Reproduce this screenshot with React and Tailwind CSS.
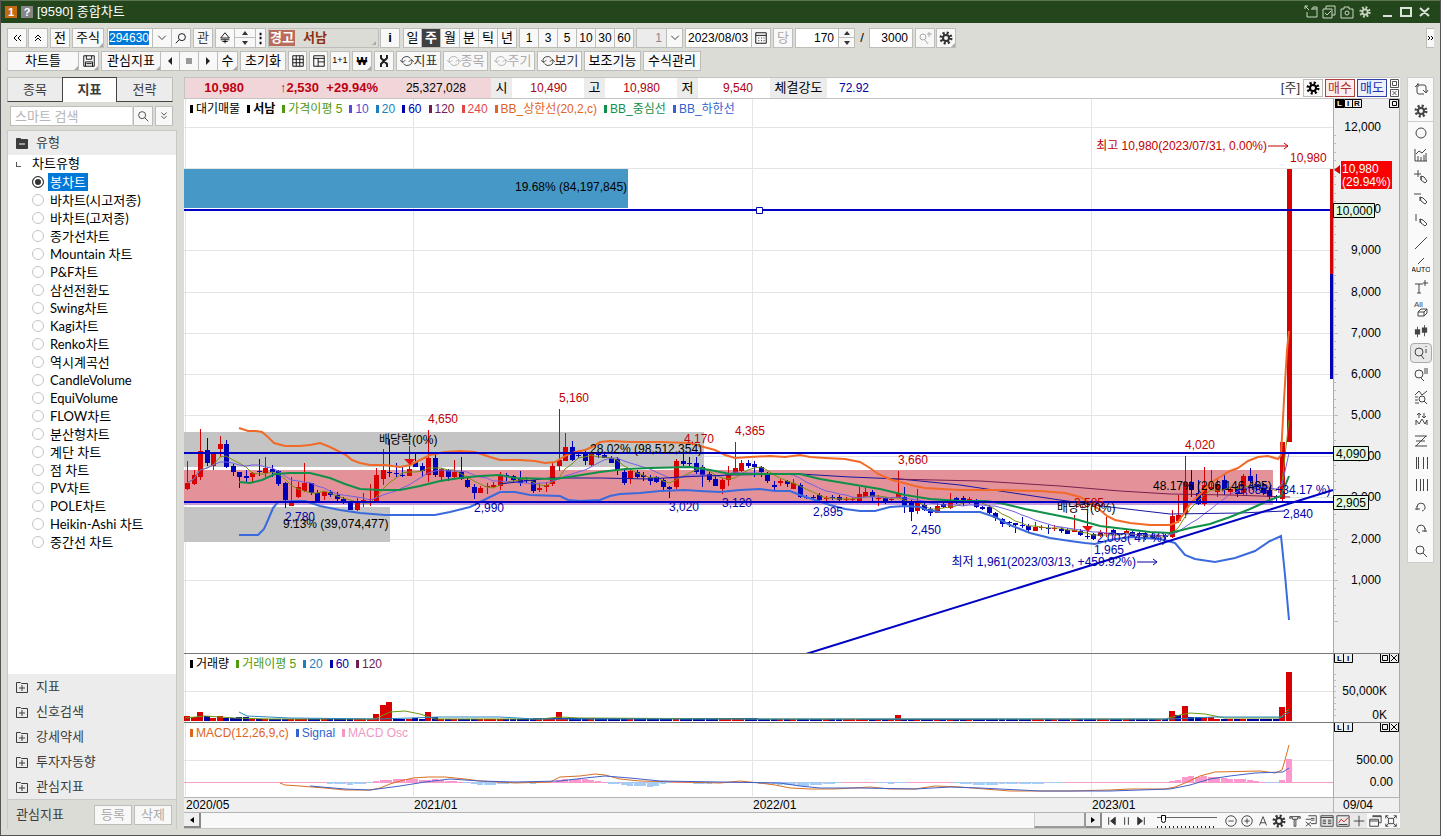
import { useState } from "react";
import { clsx } from "clsx";

const chartTypes = [
  "봉차트", "바차트(시고저종)", "바차트(고저종)", "종가선차트", "Mountain 차트", "P&F차트", "삼선전환도",
  "Swing차트", "Kagi차트", "Renko차트", "역시계곡선", "CandleVolume", "EquiVolume", "FLOW차트",
  "분산형차트", "계단 차트", "점 차트", "PV차트", "POLE차트", "Heikin-Ashi 차트", "중간선 차트",
];

// high, body top, body bottom, low, direction (1 = up); three units to a pixel
const candles = [
  [243,310,326,329,1],[270,285,312,315,1],[148,213,292,300,1],[173,210,248,258,0],[220,220,258,270,1],
  [168,192,206,232,1],[180,192,260,265,0],[252,258,275,288,0],[275,276,292,323,0],[270,288,293,305,0],
  [275,278,290,310,1],[237,273,276,287,0],[230,264,280,292,1],[255,267,276,290,0],[270,272,312,318,0],
  [305,308,360,383,0],[290,362,378,378,1],[307,320,350,355,1],[250,310,332,335,1],[308,310,340,345,0],
  [330,340,362,368,0],[332,336,347,360,1],[330,336,345,352,0],[335,345,358,362,0],[350,357,370,372,0],
  [362,365,390,390,0],[355,368,390,392,1],[340,360,364,380,1],[312,357,361,378,1],[265,284,362,365,1],
  [208,270,297,315,1],[178,275,278,292,0],[250,278,281,292,0],[262,285,288,292,0],[198,267,287,287,1],
  [220,246,262,262,0],[250,257,272,290,0],[150,234,284,305,1],[222,234,285,290,0],[265,268,290,307,1],
  [268,270,290,302,0],[240,275,290,295,1],[232,275,298,300,0],[295,300,320,325,0],[312,320,338,357,0],
  [318,324,338,340,1],[310,318,322,343,1],[305,316,320,325,1],[275,284,318,330,1],[280,284,290,303,0],
  [285,287,300,310,0],[272,297,310,318,0],[290,300,303,310,0],[300,300,333,340,0],[310,325,330,335,1],
  [305,316,320,337,1],[250,257,313,318,1],[87,240,258,272,1],[158,200,242,243,1],[182,200,240,243,0],
  [215,226,229,235,0],[210,215,242,255,0],[215,220,254,258,1],[215,222,225,235,0],[220,224,233,235,0],
  [228,234,248,250,0],[232,236,270,285,0],[265,275,308,315,0],[265,272,298,312,1],[270,275,291,295,0],
  [275,286,290,303,0],[285,290,303,315,0],[288,290,305,310,0],[295,300,320,337,0],[318,322,326,353,0],
  [238,243,320,327,1],[222,243,252,258,0],[230,248,251,260,0],[232,250,275,283,0],[255,262,284,320,0],
  [275,283,300,307,0],[285,297,318,318,0],[295,300,326,342,1],[258,283,299,318,1],[187,264,278,280,1],
  [240,250,272,275,1],[240,249,257,265,0],[243,252,261,290,0],[258,261,276,290,0],[275,280,303,308,0],
  [303,314,321,332,0],[298,304,309,317,1],[300,304,311,322,0],[298,310,328,328,1],[310,314,350,355,0],
  [345,350,353,357,0],[345,350,354,356,0],[340,345,360,362,0],[348,354,358,363,1],[346,352,355,360,0],
  [345,350,359,368,0],[352,356,359,367,1],[350,356,359,362,1],[320,342,362,362,1],[320,335,350,350,1],
  [330,336,350,362,0],[345,354,357,377,1],[350,354,368,372,0],[350,356,359,365,1],[272,340,354,355,1],
  [320,350,375,398,0],[360,367,396,423,0],[328,370,392,402,1],[370,376,390,392,0],[382,388,398,408,0],
  [370,378,398,398,1],[365,372,380,385,0],[338,366,385,387,1],[350,355,362,372,0],[348,354,365,378,0],
  [350,356,359,372,1],[358,364,381,385,0],[378,382,387,390,0],[375,382,400,402,0],[395,400,413,422,0],
  [415,418,432,442,0],[422,426,430,440,0],[428,430,434,460,0],[410,434,438,445,0],[433,437,449,455,0],
  [426,440,452,453,1],[435,442,445,450,1],[435,444,448,462,0],[436,445,448,452,1],[440,446,452,458,0],
  [445,450,462,462,0],[405,450,455,455,1],[448,453,466,468,0],[400,467,470,478,0],[458,462,476,480,0],
  [450,456,469,470,1],[412,458,461,472,1],[448,450,462,465,0],[458,460,466,468,0],[450,454,460,460,1],
  [452,456,470,470,0],[455,458,468,472,0],[455,462,476,480,0],[460,464,476,478,0],[462,465,468,472,1],
  [462,466,472,485,0],[390,408,472,475,1],[345,405,422,428,1],[228,306,402,415,1],[270,305,330,350,0],
  [300,338,372,375,0],[260,315,372,378,1],[270,322,328,330,1],[295,312,335,350,1],[282,300,328,345,0],
  [320,328,336,345,1],[318,328,342,350,0],[282,288,340,348,1],[265,288,302,310,0],[282,312,322,332,0],
  [310,322,338,345,0],[322,330,350,357,0],[345,350,354,368,0],[185,185,357,362,1],[-633,-633,186,186,1],
];

const barX = (i) => 187 + Math.round(i * 6.52);
const tickY = (v) => Math.round(380 + v / 3);
const priceY = (p) => Math.round(621 - p * 0.04118);

const average = (n) =>
  candles
    .map((_, i) => {
      const part = candles.slice(Math.max(0, i - n + 1), i + 1);
      const sum = part.reduce((acc, c) => acc + (c[4] ? c[1] : c[2]), 0);
      return `${barX(i)},${tickY(sum / part.length)}`;
    })
    .join(" ");

const upperBand =
  "239,428 248,431 256,431 262,432 269,438 274,443 285,446 300,446 310,445 320,443 330,447 340,452 346,455 352,460 360,463 370,465 385,465 400,467 410,465 420,460 430,455 445,452 460,451 475,452 490,457 500,460 520,460 535,461 545,463 555,462 560,459 567,455 575,452 585,450 592,447 600,442 610,441 630,442 660,442 690,443 700,446 715,450 725,455 735,458 750,457 770,456 785,457 800,455 810,457 825,458 845,459 860,462 870,468 878,474 885,477 892,480 900,482 915,486 925,488 960,490 1000,490 1040,491 1065,493 1080,497 1090,503 1100,510 1107,516 1115,520 1130,523 1150,525 1170,525 1178,522 1185,512 1190,504 1200,494 1210,483 1220,477 1230,471 1238,468 1248,461 1258,457 1268,456 1278,459 1281,455 1284,400 1287,350 1289,331";
const lowerBand =
  "239,535 258,535 264,529 268,520 273,508 278,502 295,501 305,501 320,506 340,510 360,513 385,515 435,515 450,512 470,507 480,502 490,497 500,492 515,492 530,495 560,496 568,500 580,501 600,500 610,496 620,494 640,493 660,491 685,490 700,491 720,492 740,490 760,489 775,491 790,491 800,495 815,500 830,505 845,509 860,511 875,511 890,507 905,506 920,507 927,510 940,512 980,512 995,517 1010,525 1030,533 1050,538 1070,541 1085,543 1095,544 1110,540 1130,537 1160,539 1175,543 1185,555 1195,559 1215,562 1235,558 1255,551 1270,541 1281,536 1285,575 1289,620";
const middleBand =
  "239,482 250,483 262,480 275,474 290,473 310,473 330,478 345,484 360,489 380,490 400,490 420,486 440,481 460,478 480,476 500,475 515,478 555,479 575,476 600,472 625,469 650,468 690,467 710,470 730,474 800,474 820,479 850,484 880,489 905,495 930,499 960,501 985,501 1000,503 1025,509 1050,514 1075,519 1100,526 1125,529 1150,532 1170,533 1190,528 1210,524 1230,517 1250,509 1270,500 1281,496 1289,476";

// x, baseline, text, color
const chartLabels = [
  [428, 423, "4,650", "#c00000"], [559, 402, "5,160", "#c00000"], [684, 443, "4,170", "#c00000"],
  [735, 435, "4,365", "#c00000"], [898, 464, "3,660", "#c00000"], [1074, 507, "3,585", "#c00000"],
  [1185, 449, "4,020", "#c00000"], [1290, 162, "10,980", "#c00000"],
  [285, 521, "2,780", "#0000a8"], [474, 512, "2,990", "#0000a8"], [669, 511, "3,020", "#0000a8"],
  [722, 507, "3,120", "#0000a8"], [813, 516, "2,895", "#0000a8"], [911, 534, "2,450", "#0000a8"],
  [1094, 554, "1,965", "#0000a8"], [1283, 518, "2,840", "#0000a8"],
  [515, 191, "19.68% (84,197,845)", "#000"], [590, 453, "28.02% (98,512,354)", "#000"],
  [1153, 490, "48.17% (206,146,495)", "#000"], [283, 528, "9.13% (39,074,477)", "#000"],
  [379, 444, "배당락(0%)", "#000"], [1057, 512, "배당락(0%)", "#000"],
  [1097, 542, "2,003( 47 %)", "#0000a8"], [1238, 494, "3,083( +34.17 %)", "#0000a8"],
];

const volumes = {
  0: 4, 1: 3, 2: 8, 3: 4, 4: 2, 5: 4, 6: 2, 7: 2, 8: 3, 9: 3, 29: 6, 30: 15, 31: 18, 35: 2, 37: 8, 38: 3,
  57: 8, 109: 5, 151: 9, 152: 5, 153: 14, 154: 3, 155: 3, 156: 3, 157: 3, 168: 13, 169: 48,
};

// first bar, heights above (+) or below (-) the zero line
const oscillator = [
  [22, [-2, -2, -2, -3, -2, -2, -1, 2, 3, 3, 4, 4, 4, 4, 3, 3, 4, 3, 2, 2, 1]],
  [43, [-1, -2, -3, -3, -3, -2, -2, -1, -1, 0, -2, -1, 0, 1, 3, 4, 4, 4, 4, 3, 2, 1]],
  [65, [-2, -2, -3, -4, -4, -4, -5, -4, -2, -1, 0, 1, 0, -2, -2, -2, -1]],
  [87, [-1, -2, -2, -2, -3, -3, -3, -4, -4, -3, -3, -2, -2, -1]],
  [106, [-1, -1, -2, -1, -1, 0, 1, 1, 1, 1, 0, 0, -1, -2, -2, -3, -3, -3, -3, -2, -2, -2, -2, -2, -2, -2, -1, -1, -1]],
  [143, [1, 1, 1, 1]],
  [151, [2, 3, 6, 7, 6, 7, 6, 6, 5, 4, 4, 4, 3, 2, 1, -1, -1, 3, 24]],
];

const icons = {
  rewind: "M8 5 5 8l3 3M12 5 9 8l3 3",
  up: "M5 8l3-3 3 3M5 11l3-3 3 3",
  down: "M5 4l3 3 3-3M5 8l3 3 3-3",
  forward: "M5 6l2 2-2 2M8 6l2 2-2 2",
  chevron: "M3 5l5 5 5-5",
  search: "M10 10l4 4M7 11a4 4 0 1 1 0-8 4 4 0 0 1 0 8",
  searchLeft: "M6 10l-4 4M9 11a4 4 0 1 1 0-8 4 4 0 0 1 0 8",
  searchPlus: "M8 10l3 4M6 10a3 3 0 1 1 0-6 3 3 0 0 1 0 6M12 2v5M10 4h5",
  searchInfo: "M8 10l3 4M6 11a4 4 0 1 1 0-8 4 4 0 0 1 0 8M13 4v4M13 1v1",
  searchList: "M8 11l3 3M6 11a4 4 0 1 1 0-8 4 4 0 0 1 0 8M11 2h4M11 4h4M11 6h4",
  sort: "M8 2 3 8h10zM3 10h10M8 10v4M5 12h6",
  save: "M2 2h12v12H2zM5 2v4h6V2M4 14V9h8v5M5 11h6",
  table: "M2 2h12v12H2zM2 6h12M2 10h12M6 2v12M10 2v12",
  layout: "M2 2h12v12H2zM2 5h12M7 5v9M7 9h7",
  refresh: "M3 9a5 4 0 0 1 9-4M13 7a5 4 0 0 1-9 4M0 7l3 3 3-3M10 9l3-3 3 3",
  calendar: "M2 2h12v12H2zM2 5h12M5 8h1M8 8h1M11 8h1M5 11h1M8 11h1M11 11h1",
  loop: "M5 4h6a2 2 0 0 1 2 2v5M10 9l3 3 2-3M11 13H6a2 2 0 0 1-2-2V5M2 6l3-3M5 2v4",
  circle: "M8 3a5 5 0 1 1 0 10A5 5 0 0 1 8 3",
  chart: "M2 2v12h12M5 14V9M8 14v-4M11 14V8M13 14V6M3 7l3-3 3 2 4-4",
  crossPen: "M1 5h7M5 1v7M8 7l3 1 3 4-2 2-4-3zM8 7v4",
  dashPen: "M1 3h7M7 6l3 1 4 4-2 2-4-3zM7 6v4",
  barPen: "M3 1v7M7 6l3 1 4 4-2 2-4-3zM7 6v4",
  slash: "M2 14 14 2",
  text: "M2 5h8M6 5v9M4 14h4M12 1v6M10 4h5",
  zigSearch: "M2 6l4-4 3 4 5-4M2 8h3M2 11h3M2 14h4M9 13a3 3 0 1 1 0-6 3 3 0 0 1 0 6M11 12l3 3",
  waves: "M3 14V9l3 4 3-5 3 5 2-4v5M6 7V2L4 4M6 2l2 2M11 2v5l-2-2M11 7l2-2",
  zed: "M2 3h12M13 3 3 13M3 8h9M2 13h12",
  undo: "M2 10h5M4 7v4M4 8a4 4 0 1 1 5 4",
  redo: "M14 10H9M12 7v4M12 8a4 4 0 1 0-5 4",
  minus: "M8 2a6 6 0 1 1 0 12A6 6 0 0 1 8 2M5 8h6",
  plus: "M8 2a6 6 0 1 1 0 12A6 6 0 0 1 8 2M5 8h6M8 5v6",
  letterA: "M4 13 8 3l4 10M5 10h6",
  brush: "M2 5V3h12v2l-3-1v2H5V4zM7 6v8h2V6",
  note: "M5 2h9v9H8M2 6h6M2 9l6 5M8 9l-6 5M8 5h4M8 7h4",
  panel: "M1 2h14v12H1zM1 4h14M3 7h4M3 9h4M3 11h4M9 7h4M9 9h4M9 11h4",
  cross: "M8 2v12M2 8h12",
  windows: "M5 2h10v8h-3M2 6h10v8H2zM2 8h10M5 3h10",
  fullscreen: "M2 5V2h3M11 2h3v3M14 11v3h-3M5 14H2v-3M5 5h6v6H5zM2 2l3 3M14 2l-3 3M2 14l3-3M14 14l-3-3",
};

const Icon = ({ name, className = "size-4" }) => (
  <svg viewBox="0 0 16 16" className={clsx("shrink-0", className)} fill="none" stroke="currentColor" aria-hidden="true">
    <path d={icons[name]} />
  </svg>
);

const Gear = ({ className = "size-4" }) => (
  <svg viewBox="0 0 16 16" className={clsx("shrink-0", className)} fill="none" stroke="currentColor" aria-hidden="true">
    <circle cx="8" cy="8" r="3" strokeWidth="2" />
    <circle cx="8" cy="8" r="5" strokeWidth="3" strokeDasharray="2 1.927" />
  </svg>
);

const Btn = ({ children, className, corner, label }) => (
  <button
    type="button"
    aria-label={label}
    className={clsx(
      "relative flex h-5 shrink-0 items-center justify-center border border-[#bdbdb9] bg-[#f8f8f8] whitespace-nowrap",
      className
    )}
  >
    {children}
    {corner && (
      <svg viewBox="0 0 4 4" className="absolute right-0 bottom-0 size-1 fill-[#aaa]" aria-hidden="true">
        <path d="M4 0v4H0z" />
      </svg>
    )}
  </button>
);

const Spinner = ({ className }) => (
  <div className={clsx("flex h-5 shrink-0 flex-col border border-[#bdbdb9] bg-[#f8f8f8]", className)}>
    <button type="button" aria-label="증가" className="flex h-[9px] items-center justify-center border-b border-[#bdbdb9]">
      <svg viewBox="0 0 6 4" className="h-1 w-1.5 fill-[#333]"><path d="M3 0l3 4H0z" /></svg>
    </button>
    <button type="button" aria-label="감소" className="flex h-[9px] items-center justify-center">
      <svg viewBox="0 0 6 4" className="h-1 w-1.5 fill-[#333]"><path d="M0 0h6L3 4z" /></svg>
    </button>
  </div>
);

const TitleBar = () => (
  <header className="flex h-[23px] items-center gap-1 border-t border-[#5b7552] bg-[#24461c] pr-2 pl-1 text-[13px] text-white">
    <span className="flex size-3 items-center justify-center bg-[#c46a10] text-[11px] font-bold">1</span>
    <span className="flex size-3 items-center justify-center bg-[#858585] text-[11px] font-bold">?</span>
    <h1 className="grow text-[13px]">[9590] 종합차트</h1>
    <div className="flex items-center gap-1 text-[#c9d6c4]">
      <svg viewBox="0 0 14 14" className="size-3.5" fill="none" stroke="currentColor"><path d="M1 1l4 4M1 4V1h3M3 7v5h10V4H7M9 4V2h4v2" /></svg>
      <svg viewBox="0 0 14 14" className="size-3.5" fill="none" stroke="currentColor"><path d="M1 4h9v9H1zM4 4V1h9v9h-3M3 8l2 2 4-4" /></svg>
      <svg viewBox="0 0 14 14" className="size-3.5" fill="none" stroke="currentColor"><path d="M1 4h3V2h5v2h4v9H1z" /><circle cx="7" cy="8" r="2" /></svg>
      <Gear className="size-3.5" />
      <svg viewBox="0 0 50 12" className="ml-1.5 h-3 w-[50px]" fill="none" stroke="#dbe4d8" strokeWidth="2"><path d="M1 10h9M19 2h10v8H19zM38 2l9 8M47 2l-9 8" /></svg>
    </div>
  </header>
);

const periods = ["일", "주", "월", "분", "틱", "년"];
const minutes = ["1", "3", "5", "10", "30", "60"];

const Toolbar = () => {
  const [code, setCode] = useState("294630");
  const [period, setPeriod] = useState("주");

  return (
    <div className="flex flex-col gap-[3px] px-1.5 pt-[5px] pb-1.5 text-[13px]">
      <div className="flex items-center">
        <Btn label="처음" className="w-5"><Icon name="rewind" /></Btn>
        <Btn label="위로" className="ml-px w-5"><Icon name="up" /></Btn>
        <Btn className="ml-0.5 w-5">전</Btn>
        <Btn className="ml-0.5 w-8" corner>주식</Btn>
        <div className="ml-[3px] flex h-5 w-[45px] items-center border border-r-0 border-[#bdbdb9] bg-white px-px">
          <input
            aria-label="종목코드"
            className="h-3.5 w-10 bg-[#0078d7] text-[12px] text-white outline-none"
            value={code}
            onChange={(e) => setCode(e.target.value)}
          />
        </div>
        <Btn label="목록" className="w-5"><Icon name="chevron" className="size-3" /></Btn>
        <Btn label="검색" className="w-[19px] border-l-0"><Icon name="searchLeft" className="size-3.5" /></Btn>
        <Btn className="ml-0.5 w-5 text-[#444]">관</Btn>
        <Btn label="정렬" className="ml-0.5 w-5"><Icon name="sort" className="size-3.5" /></Btn>
        <Spinner className="w-[21px] border-l-0" />
        <Btn label="더보기" className="w-[10px] border-l-0 font-bold">⋮</Btn>
        <button type="button" className="relative ml-0.5 flex h-5 w-[111px] items-center gap-2 border border-[#bdbdb9] bg-[#dcdcd6] text-left font-bold">
          <span className="bg-[#b96c5c] px-px text-[13px] leading-4 text-white">경고</span>
          <span className="text-[#8e3010]">서남</span>
          <svg viewBox="0 0 4 4" className="absolute right-0.5 bottom-0.5 size-1 fill-[#aaa]" aria-hidden="true"><path d="M4 0v4H0z" /></svg>
        </button>
        <Btn className="ml-px w-5 font-bold">i</Btn>
        <div className="ml-[3px] flex">
          {periods.map((p, i) => (
            <button
              key={p}
              type="button"
              onClick={() => setPeriod(p)}
              className={clsx(
                "flex h-5 w-[19px] items-center justify-center border-y border-r border-[#bdbdb9]",
                i === 0 && "border-l",
                p === period ? "bg-[#414141] font-bold text-white" : "bg-[#f8f8f8]"
              )}
            >
              {p}
            </button>
          ))}
        </div>
        <div className="ml-0.5 flex border-l border-[#bdbdb9] text-[12px]">
          {minutes.map((m) => (
            <button key={m} type="button" className="flex h-5 w-[19px] items-center justify-center border-y border-r border-[#bdbdb9] bg-[#f8f8f8]">
              {m}
            </button>
          ))}
        </div>
        <input aria-label="분 주기" readOnly value="1" className="ml-0.5 h-5 w-[30px] border border-r-0 border-[#bdbdb9] bg-[#ececec] pr-1 text-right text-[12px] text-[#888]" />
        <Btn label="주기 목록" className="w-[17px]"><Icon name="chevron" className="size-3" /></Btn>
        <input aria-label="날짜" readOnly value="2023/08/03" className="ml-0.5 h-5 w-[67px] border border-[#bdbdb9] bg-white px-0.5 text-[12px]" />
        <Btn label="달력" className="w-[19px] border-l-0"><Icon name="calendar" className="size-3.5" /></Btn>
        <Btn className="ml-0.5 w-5 text-[#aaa]">당</Btn>
        <input aria-label="봉 개수" readOnly value="170" className="ml-0.5 h-5 w-[44px] border border-[#bdbdb9] bg-white pr-1 text-right text-[12px]" />
        <Spinner className="w-4 border-l-0" />
        <span className="w-3.5 text-center">/</span>
        <input aria-label="전체 봉 개수" readOnly value="3000" className="h-5 w-[44px] border border-[#bdbdb9] bg-white pr-1 text-right text-[12px]" />
        <Btn label="확대" className="ml-0.5 w-5 text-[#aaa]"><Icon name="searchPlus" /></Btn>
        <Btn label="설정" className="ml-px w-5 text-[#333]" corner><Gear /></Btn>
        <div className="grow" />
        <Btn label="펼치기" className="w-2 border-r-0"><Icon name="forward" /></Btn>
      </div>

      <div className="flex items-center">
        <Btn className="w-[72px]" corner>차트틀</Btn>
        <Btn label="저장" className="w-5 border-l-0" corner><Icon name="save" className="size-3.5" /></Btn>
        <Btn className="ml-0.5 w-[60px]" corner>관심지표</Btn>
        <Btn label="이전" className="w-[19px] border-l-0"><svg viewBox="0 0 8 8" className="size-2 fill-[#222]"><path d="M6 0v8L2 4z" /></svg></Btn>
        <Btn label="정지" className="w-[19px] border-l-0"><svg viewBox="0 0 8 8" className="size-2 fill-[#999]"><path d="M1 1h6v6H1z" /></svg></Btn>
        <Btn label="다음" className="w-[19px] border-l-0"><svg viewBox="0 0 8 8" className="size-2 fill-[#222]"><path d="M2 0v8l4-4z" /></svg></Btn>
        <Btn className="w-5 border-l-0" corner>수</Btn>
        <Btn className="ml-0.5 w-[46px]">초기화</Btn>
        <Btn label="격자" className="ml-0.5 w-[19px]"><Icon name="table" className="size-3.5" /></Btn>
        <Btn label="화면 구성" className="ml-0.5 w-[19px]"><Icon name="layout" className="size-3.5" /></Btn>
        <Btn className="ml-0.5 w-5 text-[9px]">1+1</Btn>
        <Btn className="ml-0.5 w-5 text-[11px] font-bold" corner>₩</Btn>
        <Btn label="도구" className="ml-0.5 w-5"><svg viewBox="0 0 10 14" className="h-3.5 w-2.5" fill="none" stroke="#222" strokeWidth="2"><path d="M2 1v3l6 6v3M8 1v3l-6 6v3" /></svg></Btn>
        <Btn className="ml-0.5 w-[45px] text-[#333]"><Icon name="refresh" className="size-3.5" />지표</Btn>
        <Btn className="ml-0.5 w-[45px] text-[#aaa]"><Icon name="refresh" className="size-3.5" />종목</Btn>
        <Btn className="ml-0.5 w-[45px] text-[#aaa]"><Icon name="refresh" className="size-3.5" />주기</Btn>
        <Btn className="ml-0.5 w-[45px] text-[#333]"><Icon name="refresh" className="size-3.5" />보기</Btn>
        <Btn className="ml-0.5 w-[57px]">보조기능</Btn>
        <Btn className="ml-0.5 w-[58px]">수식관리</Btn>
      </div>
    </div>
  );
};

const FolderIcon = ({ open }) => (
  <svg viewBox="0 0 12 12" className="size-3 shrink-0" fill={open ? "#3c3c3c" : "none"} stroke="#3c3c3c" aria-hidden="true">
    <path d="M.5 1.500h4l1 1h6v9H.5z" />
    <path d={open ? "M3 7h6" : "M3 7h6M6 4v6"} stroke={open ? "#fff" : "#3c3c3c"} />
  </svg>
);

const SidePanel = () => {
  const [type, setType] = useState("봉차트");

  return (
    <aside className="flex w-[170px] shrink-0 flex-col text-[13px] text-[#3c3c3c]">
      <div className="flex h-[25px] pr-1">
        <button type="button" className="w-[55px] border-t border-b border-l border-[#bdbdb9] border-b-[#444] bg-[#ececec]">종목</button>
        <button type="button" className="w-[55px] border border-b-0 border-[#444] bg-white font-bold">지표</button>
        <button type="button" className="grow border-t border-r border-b border-[#bdbdb9] border-b-[#444] bg-[#ececec]">전략</button>
      </div>
      <div className="flex gap-px py-1 pr-1 pl-[3px]">
        <input
          aria-label="스마트 검색"
          placeholder="스마트 검색"
          className="h-5 w-[122px] border border-r-0 border-[#bdbdb9] bg-white px-1 placeholder:text-[#b5b5b5]"
        />
        <Btn label="검색" className="w-5"><Icon name="search" className="size-3.5" /></Btn>
        <Btn label="펼치기" className="ml-px grow"><Icon name="down" className="size-3.5" /></Btn>
      </div>
      <div className="flex grow flex-col border-x border-[#c8c8c5] bg-white">
        <h2 className="flex h-[25px] items-center gap-2 border-t border-[#c8c8c5] bg-[#ececec] pl-2"><FolderIcon open />유형</h2>
        <div className="grow text-[13px] text-black [font-family:Lato,'Noto_Sans_CJK_KR',sans-serif]">
          <p className="flex h-[18px] items-center pl-2">
            <span className="mr-[11px] size-[5px] border-b border-l border-[#555]" />차트유형
          </p>
          {chartTypes.map((t) => (
            <label key={t} className="flex h-[18px] items-center gap-1 pl-6">
              <input
                type="radio"
                name="chartType"
                checked={type === t}
                onChange={() => setType(t)}
                className="size-3 shrink-0 appearance-none rounded-full border border-[#c4c4c4] bg-white checked:border-[#333] checked:bg-[#333] checked:ring-2 checked:ring-white checked:ring-inset"
              />
              <span className={clsx("px-0.5 leading-[18px] whitespace-nowrap", type === t && "bg-[#0078d7] text-white")}>{t}</span>
            </label>
          ))}
        </div>
        <ul className="bg-[#ececec]">
          {["지표", "신호검색", "강세약세", "투자자동향", "관심지표"].map((name) => (
            <li key={name}>
              <button type="button" className="flex h-[25px] w-full items-center gap-2 pl-2"><FolderIcon />{name}</button>
            </li>
          ))}
        </ul>
        <div className="flex h-[30px] items-center gap-0.5 border-t border-[#c8c8c5] bg-[#dcdcd6] pr-1 pl-2">
          <span className="grow">관심지표</span>
          <Btn className="w-[38px] text-[#aaa]">등록</Btn>
          <Btn className="w-[38px] text-[#aaa]">삭제</Btn>
        </div>
      </div>
    </aside>
  );
};

const QuoteBar = () => (
  <div className="flex h-[22px] items-stretch border-y border-l border-[#c4c4c4] bg-white text-[12px] leading-5">
    <div className="flex w-[306px] bg-[#f0d6d8] font-bold text-[#c00010]">
      <span className="w-[59px] text-right text-[13px]">10,980</span>
      <span className="w-[75px] text-right text-[13px]">↑2,530</span>
      <span className="w-[59px] text-right text-[13px]">+29.94%</span>
      <span className="w-[88px] text-right font-normal text-black">25,327,028</span>
    </div>
    {[["시", "10,490"], ["고", "10,980"], ["저", "9,540"]].map(([name, price]) => (
      <div key={name} className="flex w-[93px]">
        <span className="w-[21px] bg-[#ececec] text-center text-[13px]">{name}</span>
        <span className="w-[55px] text-right text-[#b00010]">{price}</span>
      </div>
    ))}
    <span className="w-[57px] bg-[#ececec] text-center text-[13px]">체결강도</span>
    <span className="grow pl-3 text-[#0000a0]">72.92</span>
    <div className="flex items-center gap-0.5 text-[13px]">
      <span className="pr-px text-[#333]">[주]</span>
      <Btn label="설정" className="h-[18px] w-5"><Gear /></Btn>
      <button type="button" className="h-[18px] w-[30px] border border-[#b04040] bg-[#fdeeee] leading-4 text-[#b03030]">매수</button>
      <button type="button" className="h-[18px] w-[30px] border border-[#3040a8] bg-[#eef0fd] leading-4 text-[#2030b0]">매도</button>
      <svg viewBox="0 0 11 20" className="h-5 w-[11px]" fill="none" stroke="#555"><path d="M1.500 1.500h8v8h-8zM3.500 3.500h4v4h-4zM1.500 11.500h8v7h-8zM3.500 13l4 4M7.500 13l-4 4" /></svg>
    </div>
  </div>
);

const Legend = ({ items }) => (
  <ul className="absolute top-0.5 left-1.5 flex gap-[7px] text-[12px] leading-4">
    {items.map(([name, color, bold]) => (
      <li key={name} className={clsx("flex items-center gap-[3px] whitespace-nowrap", bold && "font-bold")} style={{ color }}>
        <i className="h-2 w-[3px] bg-current" />
        {name}
      </li>
    ))}
  </ul>
);

const Grid = ({ ys, top, bottom }) => (
  <g stroke="#e4e4e4" shapeRendering="crispEdges">
    {ys.map((y) => <path key={y} d={`M184 ${y}H1337`} />)}
    {[185, 413, 752, 1091].map((x) => <path key={x} d={`M${x} ${top}V${bottom}`} />)}
  </g>
);

const Axis = ({ top, bottom }) => (
  <g shapeRendering="crispEdges">
    <path d={`M1333 ${top}h67v${bottom - top}h-67z`} fill="#efefef" />
    <path d={`M1333 ${top}V${bottom}M1399 ${top}V${bottom}`} stroke="#aaa" />
  </g>
);

const PaneButtons = ({ y }) => (
  <g fontSize="8" fontWeight="bold">
    <path d={`M1334.500 ${y + 0.5}h9v9h-9zM1343.500 ${y + 0.5}h9v9h-9zM1380.500 ${y + 0.5}h9v9h-9zM1389.500 ${y + 0.5}h9v9h-9zM1382.500 ${y + 2.5}h5v5h-5zM1391 ${y + 2}l6 6M1397 ${y + 2}l-6 6`} fill="none" stroke="#000" />
    <text x="1337" y={y + 8}>L</text>
    <text x="1347" y={y + 8}>I</text>
  </g>
);

const PricePane = () => (
  <div className="relative bg-white">
    <svg viewBox="184 99 1216 555" className="block h-auto w-full" fontSize="12">
      <Grid ys={[...Array(12)].map((_, i) => priceY((i + 1) * 1000))} top={99} bottom={653} />
      <Axis top={99} bottom={654} />
      <g stroke="#bbb" shapeRendering="crispEdges">
        {[...Array(60)].map((_, i) => <path key={i} d={`M1333 ${priceY(i * 200)}h${i % 5 ? 3 : 5}`} />)}
      </g>
      <g shapeRendering="crispEdges">
        <path d="M184 169h444v39H184z" fill="#4699c6" />
        <path d="M184 432h520v35H184zM184 507h206v35H184z" fill="#c4c4c4" />
        <path d="M184 470h1089v33H184z" fill="#e4929a" />
        <path d="M184 503h1089v2H184z" fill="#c89ad8" />
        {candles.map(([high, top, bottom, low, up], i) => {
          const x = barX(i);
          return (
            <g key={i} fill={up ? "#d80000" : "#0000b8"}>
              <rect x={x} y={tickY(high)} width="1" height={tickY(low) - tickY(high)} />
              <rect x={x - 2} y={tickY(top)} width="5" height={Math.max(1, tickY(bottom) - tickY(top))} />
            </g>
          );
        })}
      </g>
      <g fill="none">
        <polyline points={average(5)} stroke="#7c9010" />
        <polyline points={average(10)} stroke="#7460e0" />
        <polyline points="500,484 550,478 600,478 650,479 680,477 730,475 800,474 850,477 900,479 960,485 1000,491 1060,500 1110,507 1170,514 1240,513 1285,511" stroke="#1818a0" />
        <polyline points="890,479 980,481 1060,486 1120,491 1170,494 1230,495 1290,497" stroke="#782050" />
        <polyline points={upperBand} stroke="#f26a28" strokeWidth="2" />
        <polyline points={lowerBand} stroke="#3a6adc" strokeWidth="2" />
        <polyline points={middleBand} stroke="#109048" strokeWidth="2" />
      </g>
      <g stroke="#0000c4" strokeWidth="2">
        <path d="M184 210h1149M184 453h1149M184 502h1149" shapeRendering="crispEdges" />
        <path d="M806 654 1333 490" />
      </g>
      <path d="M756.500 207.500h6v6h-6z" fill="#fff" stroke="#0000b8" />
      <path d="M1330 169h3v105h-3z" fill="#d80000" />
      <path d="M1330 274h3v105h-3z" fill="#0000b8" />
      <path d="M404 459h11l-5 6zM1082 526h11l-5 6z" fill="#e81010" />
      {chartLabels.map(([x, y, text, color]) => <text key={`${x}-${y}`} x={x} y={y} fill={color}>{text}</text>)}
      <text x="1267" y="150" textAnchor="end" fill="#c00000">최고 10,980(2023/07/31, 0.00%)</text>
      <path d="M1268 146h20M1284 143l4 3-4 3" fill="none" stroke="#c00000" />
      <text x="1136" y="566" textAnchor="end" fill="#0000a8">최저 1,961(2023/03/13, +459.92%)</text>
      <path d="M1137 562h20M1153 559l4 3-4 3" fill="none" stroke="#0000a8" />
      <g textAnchor="end">
        {[...Array(12)].map((_, i) => i !== 10 && (
          <text key={i} x="1381" y={priceY((i + 1) * 1000) + 4}>{((i + 1) * 1000).toLocaleString("en-US")}</text>
        ))}
      </g>
      <path d="M1334 170l6-5v9z" fill="#d80000" />
      <path d="M1341 161h51v28h-51z" fill="#fa0000" />
      <text x="1342" y="173" fill="#fff">10,980</text>
      <text x="1342" y="186" fill="#fff">(29.94%)</text>
      {[[210, "10,000", 41], [453, "4,090", 35], [502, "2,905", 35]].map(([y, text, w]) => (
        <g key={text}>
          <path d={`M1333.500 ${y - 6.5}h${w}v14h-${w}z`} fill="#dff8df" stroke="#000" />
          <text x="1336" y={y + 5}>{text}</text>
        </g>
      ))}
      <path d="M1335 99h9v9h-9z" />
      <path d="M1344.500 99.500h8v8h-8zM1352.500 99.500h9v8h-9zM1389.500 99.500h9v8h-9zM1392.500 101.500h4v4h-4z" fill="none" stroke="#000" />
      <g fontSize="8" fontWeight="bold">
        <text x="1337" y="106" fill="#fff">L</text>
        <text x="1347" y="106">I</text>
        <text x="1354" y="106">R</text>
      </g>
      <path d="M184 653h1216" stroke="#777" shapeRendering="crispEdges" />
    </svg>
    <Legend
      items={[
        ["대기매물", "#000"], ["서남", "#000", true], ["가격이평 5", "#4f9a10"], ["10", "#5a4ad8"], ["20", "#1880c0"],
        ["60", "#0000a8"], ["120", "#702050"], ["240", "#e04848"], ["BB_상한선(20,2,c)", "#e06420"],
        ["BB_중심선", "#109048"], ["BB_하한선", "#3064d0"],
      ]}
    />
  </div>
);

const VolumePane = () => (
  <div className="relative bg-white">
    <svg viewBox="184 654 1216 69" className="block h-auto w-full" fontSize="12">
      <Grid ys={[691]} top={654} bottom={722} />
      <Axis top={654} bottom={723} />
      <g stroke="#bbb" shapeRendering="crispEdges">
        {[674, 680, 686, 691, 697, 703, 709, 715].map((y) => <path key={y} d={`M1333 ${y}h3`} />)}
      </g>
      <g shapeRendering="crispEdges">
        {candles.map((c, i) => {
          const h = volumes[i] || 1;
          const up = h > 5 || (c[4] && i !== 152);
          return <rect key={i} x={barX(i) - 3} y={720 - h} width="6" height={h + 1} fill={up ? "#d80000" : "#0000a0"} />;
        })}
        <path d="M533 718.500h225M860 719h130" stroke="#1010b0" />
      </g>
      <g fill="none">
        <polyline points="185,718 205,716 235,718 270,719 375,719 390,712 405,711 420,714 435,719 540,719 560,717 580,718 760,719 1165,719 1180,715 1190,713 1205,714 1225,718 1280,718 1289,709" stroke="#6a9a10" />
        <polyline points="239,712 247,716 290,718 380,719 440,717 500,717 535,719 1170,719 1215,717 1282,717 1289,712" stroke="#2888c0" />
      </g>
      <text x="1387" y="695" textAnchor="end">50,000K</text>
      <text x="1387" y="719" textAnchor="end">0K</text>
      <PaneButtons y={653} />
      <path d="M184 722h1216" stroke="#777" shapeRendering="crispEdges" />
    </svg>
    <Legend items={[["거래량", "#000"], ["거래이평 5", "#4f9a10"], ["20", "#1880c0"], ["60", "#0000a8"], ["120", "#702050"]]} />
  </div>
);

const MacdPane = () => (
  <div className="relative bg-white">
    <svg viewBox="184 723 1216 74" className="block h-auto w-full" fontSize="12">
      <Grid ys={[760]} top={723} bottom={796} />
      <Axis top={723} bottom={797} />
      <path d="M184 782h1149" stroke="#f4a0c4" shapeRendering="crispEdges" />
      <g shapeRendering="crispEdges">
        {oscillator.map(([start, heights]) =>
          heights.map((h, i) => (
            <rect key={start + i} x={barX(start + i) - 3} y={h > 0 ? 783 - h : 782} width="6" height={Math.abs(h)} fill={h > 0 ? "#fc98cc" : "#a4ccf4"} />
          ))
        )}
      </g>
      <g fill="none">
        <polyline points="280,783 285,785 300,786 325,788 345,790 370,790 380,788 390,784 400,781 413,778 428,777 445,777 465,779 480,781 515,783 550,782 560,777 580,776 595,774 605,775 620,779 640,781 680,782 720,783 740,781 760,783 775,785 790,788 810,789 835,789 870,787 890,789 915,789 935,786 960,787 985,789 1010,791 1070,791 1110,790 1130,789 1165,789 1175,787 1185,783 1200,776 1215,772 1260,771 1275,773 1282,770 1285,760 1289,745" stroke="#d87020" />
        <polyline points="310,786 345,789 370,790 400,786 425,782 450,779 480,781 515,782 560,781 585,778 605,776 630,778 660,781 780,783 800,786 820,788 860,788 915,789 950,787 980,788 1040,791 1110,791 1170,789 1190,785 1210,779 1230,776 1255,773 1283,772 1289,768" stroke="#4060c8" />
      </g>
      <text x="1393" y="764" textAnchor="end">500.00</text>
      <text x="1393" y="786" textAnchor="end">0.00</text>
      <PaneButtons y={722} />
    </svg>
    <Legend items={[["MACD(12,26,9,c)", "#e06420"], ["Signal", "#3064d0"], ["MACD Osc", "#f098c4"]]} />
  </div>
);

const DateAxis = () => (
  <svg viewBox="184 797 1216 16" className="block h-auto w-full bg-[#efefef]" fontSize="12">
    <path d="M184 797h1216M184 812h1216M1333 797v16M1399 797v16" stroke="#b4b4b4" shapeRendering="crispEdges" />
    <text x="186" y="809">2020/05</text>
    <text x="414" y="809">2021/01</text>
    <text x="753" y="809">2022/01</text>
    <text x="1092" y="809">2023/01</text>
    <text x="1343" y="809">09/04</text>
  </svg>
);

const bottomTools = ["minus", "plus", "letterA", "gear", "brush", "note", "panel", "trend", "cross", "windows", "fullscreen"];

const ScrollRow = () => {
  const [zoom, setZoom] = useState(5);

  return (
    <div className="flex h-4 items-stretch border-b border-[#c4c4c4] bg-[#f8f8f8] text-[#333]">
      <button type="button" aria-label="왼쪽" className="flex w-[17px] items-center justify-center border-r-2 border-b-2 border-[#888] bg-[#efefef]">
        <svg viewBox="0 0 6 6" className="size-1.5"><path d="M5 0v6L1 3z" /></svg>
      </button>
      <div className="flex grow justify-end">
        <div className="w-[52px] border-r-2 border-b-2 border-l border-[#999] border-l-[#ccc] bg-[#efefef]" />
      </div>
      <button type="button" aria-label="오른쪽" className="flex w-4 items-center justify-center border-r-2 border-b-2 border-[#888] bg-[#efefef]">
        <svg viewBox="0 0 6 6" className="size-1.5"><path d="M1 0v6l4-3z" /></svg>
      </button>
      <div className="ml-0.5 flex">
        {["M5 4v8M12 4v8L7 8z", "M6 4v8M10 4v8", "M11 4v8M4 4v8l5-4z"].map((d) => (
          <button key={d} type="button" aria-label="재생" className="flex w-[15px] items-center justify-center">
            <svg viewBox="0 0 16 16" className="size-4" fill="#333" stroke="#333"><path d={d} /></svg>
          </button>
        ))}
      </div>
      <div className="relative mr-1 ml-1.5 w-16">
        <svg viewBox="0 0 64 15" className="absolute inset-0 h-[15px] w-16" stroke="#222" shapeRendering="crispEdges">
          <path d="M2 4h60" stroke="#666" />
          <path d="M2 14h60" strokeWidth="3" strokeDasharray="1 3" />
        </svg>
        <input
          type="range"
          aria-label="간격"
          min="0"
          max="50"
          value={zoom}
          onChange={(e) => setZoom(Number(e.target.value))}
          className="absolute inset-x-0 top-0.5 h-2 w-16 appearance-none bg-transparent [&::-webkit-slider-thumb]:h-2 [&::-webkit-slider-thumb]:w-[5px] [&::-webkit-slider-thumb]:appearance-none [&::-webkit-slider-thumb]:rounded-b-sm [&::-webkit-slider-thumb]:border [&::-webkit-slider-thumb]:border-black [&::-webkit-slider-thumb]:bg-white"
        />
      </div>
      {bottomTools.map((name) => (
        <button
          key={name}
          type="button"
          aria-label={name}
          className={clsx("flex w-4 items-center justify-center", ["panel", "trend", "cross"].includes(name) && "bg-[#e8e8e8]")}
        >
          {name === "gear" && <Gear />}
          {name === "trend" && (
            <svg viewBox="0 0 16 16" className="size-3.5" fill="none" stroke="#333"><path d="M1 2h14v12H1zM3 12h10" /><path d="M3 10l3-4 3 3 5-5" stroke="#c00" /></svg>
          )}
          {icons[name] && <Icon name={name} className="size-3.5" />}
        </button>
      ))}
      <div className="w-px" />
    </div>
  );
};

const sideTools = [
  "loop", "gear", "circle", "chart", "crossPen", "dashPen", "barPen", "slash", "auto", "text", "all", "candle",
  "searchInfo", "searchList", "zigSearch", "waves", "zed", "bars4", "bars5", "undo", "redo", "search",
];

const SideIcon = ({ name }) => {
  if (name === "gear") return <Gear />;
  if (name === "auto") {
    return (
      <svg viewBox="0 0 18 18" className="size-[18px]" stroke="currentColor">
        <path d="M6 8l6-6" />
        <text x="9" y="16" textAnchor="middle" fontSize="7" stroke="none">AUTO</text>
      </svg>
    );
  }
  if (name === "all") {
    return (
      <svg viewBox="0 0 16 18" className="h-[18px] w-4" fill="none" stroke="currentColor">
        <text x="1" y="7" fontSize="8" fill="currentColor" stroke="none">All</text>
        <path d="M5 12l3-3h6l-3 3zM5 12v4h6v-4M11 16l3-3V9" />
      </svg>
    );
  }
  if (name === "candle") {
    return <svg viewBox="0 0 16 16" className="size-3.5 fill-current"><path d="M1 6h6v6H1zM9 4h6v6H9zM3.500 3h1v12h-1zM11.500 1h1v13h-1z" /></svg>;
  }
  if (name === "bars4" || name === "bars5") {
    return (
      <svg viewBox="0 0 14 14" className="size-3.5" stroke="currentColor" shapeRendering="crispEdges">
        <path d={name === "bars4" ? "M2 1v12M4 1v12M9 1v12M13 1v12" : "M2 1v12M6 1v12M9 1v12M13 1v12"} />
      </svg>
    );
  }
  return <Icon name={name} />;
};

const SideTools = () => (
  <nav className="flex w-[27px] shrink-0 flex-col self-start border border-[#ccc] bg-[#fafafa] text-[#444]">
    {sideTools.map((name, i) => (
      <div key={name} className={clsx("flex h-[22px] items-center justify-center", i === 1 && "border-b border-[#ccc]")}>
        <button
          type="button"
          aria-label={name}
          className={clsx(
            "flex h-5 w-[22px] items-center justify-center",
            name === "searchInfo" && "rounded-sm border border-[#aaa] bg-[#e8e8e8]"
          )}
        >
          <SideIcon name={name} />
        </button>
      </div>
    ))}
  </nav>
);

const App = () => {
  return (
    <div className="flex min-h-screen flex-col border-x border-b border-[#555] bg-[#dcdcd6] text-black [font-family:'Liberation_Sans','Noto_Sans_CJK_KR',sans-serif]">
      <TitleBar />
      <Toolbar />
      <main className="flex grow gap-[7px] px-1.5 pb-1.5">
        <SidePanel />
        <section className="min-w-0 grow">
          <QuoteBar />
          <PricePane />
          <VolumePane />
          <MacdPane />
          <DateAxis />
          <ScrollRow />
        </section>
        <SideTools />
      </main>
    </div>
  );
};

export default App;
